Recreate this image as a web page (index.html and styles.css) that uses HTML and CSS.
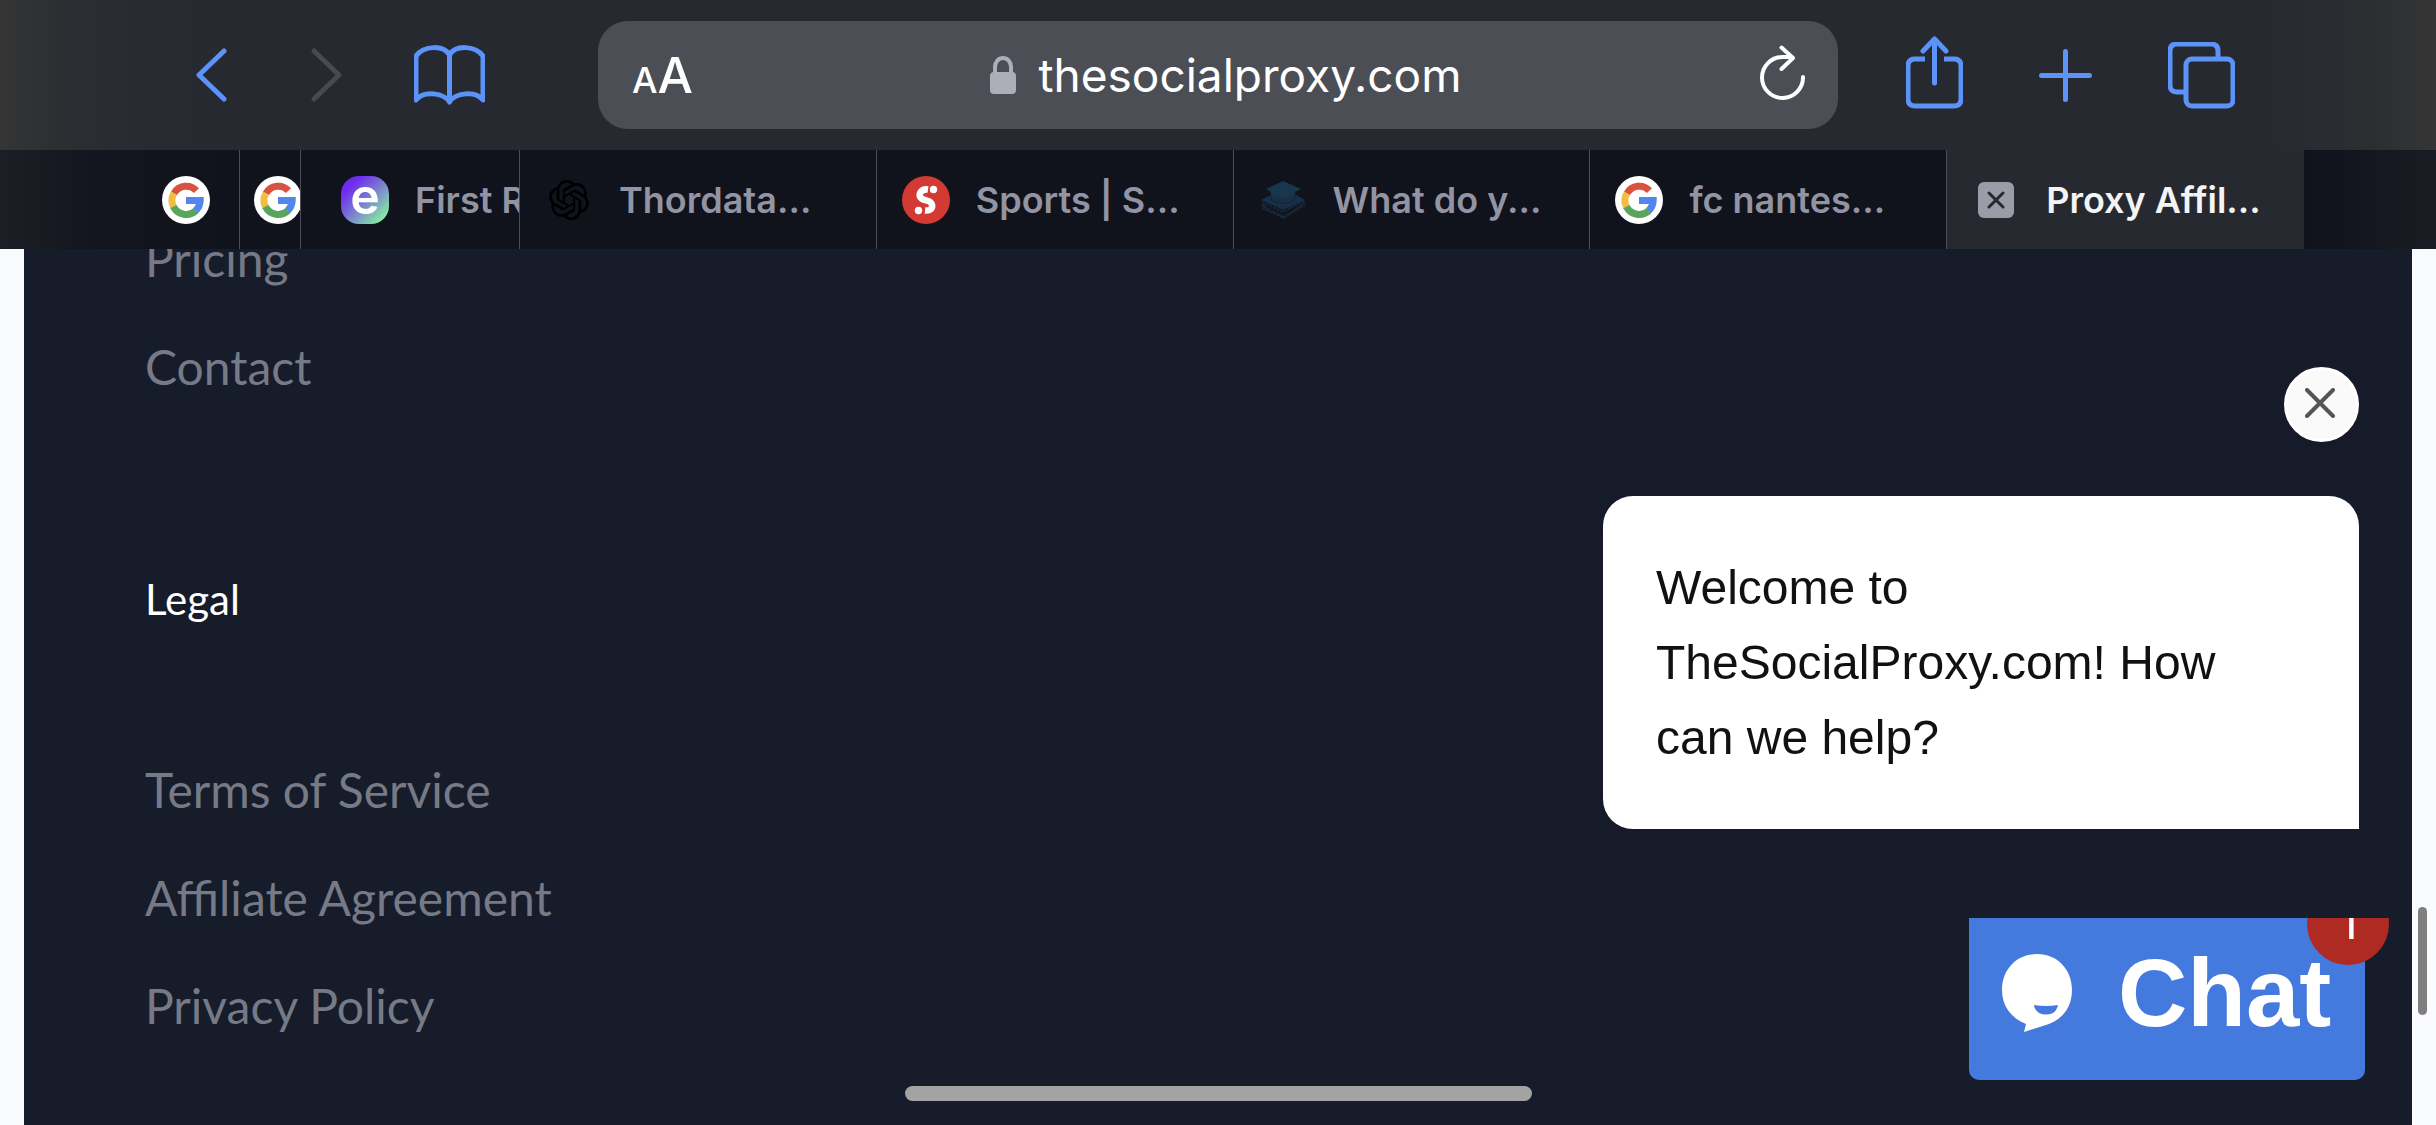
FILE: index.html
```html
<!DOCTYPE html>
<html lang="en">
<head>
  <meta charset="UTF-8" />
  <meta name="viewport" content="width=device-width, initial-scale=1.0"/>
  <title>Proxy Affiliate Program</title>
  <link rel="stylesheet" href="styles.css">
</head>
<body>

<svg class="defs" aria-hidden="true">
  <symbol id="google" viewBox="0 0 48 48">
    <circle cx="24" cy="24" r="24" fill="#fff"/>
    <g fill="none" stroke-width="7">
      <path d="M12 17.4A14 14 0 0 1 34.5 14.6" stroke="#d9513f"/>
      <path d="M11.6 31A14 14 0 0 1 12 17.2" stroke="#f2bd42"/>
      <path d="M34 34.6A14.4 14.4 0 0 1 11.4 30.6" stroke="#58a55c"/>
      <path d="M24 24.4H38.2A14 14 0 0 1 33.6 34.6" stroke="#5186ec"/>
    </g>
  </symbol>
</svg>

<header class="toolbar">
  <div class="toolbar-left">
    <div class="history">
      <button class="tool" aria-label="Back">
        <svg width="31" height="54" viewBox="0 0 31 54"><path d="M28 3L3 27l25 24"/></svg>
      </button>
      <button class="tool off" aria-label="Forward" disabled>
        <svg width="31" height="54" viewBox="0 0 31 54"><path d="M3 3l25 24L3 51"/></svg>
      </button>
    </div>
    <button class="tool" aria-label="Bookmarks">
      <svg width="71" height="60" viewBox="0 0 71 60"><path d="M35.500 57C30 48 10 45 2 55V11C10 0 30 0 35.500 10C41 0 61 0 69 11V55C61 45 41 48 35.500 57V10"/></svg>
    </button>
  </div>

  <form class="address">
    <button class="text-size" type="button" aria-label="Page settings"><span class="small-a">A</span><span class="big-a">A</span></button>
    <label class="url">
      <svg width="26" height="38" viewBox="0 0 26 38" aria-hidden="true"><rect y="16" width="26" height="22" rx="4" fill="#aeaeb8"/><path d="M5 17V11a8 9 0 0 1 16 0v6" fill="none" stroke="#aeaeb8" stroke-width="4"/></svg>
      <input type="text" value="thesocialproxy.com" aria-label="Address">
    </label>
    <button class="reload" type="button" aria-label="Reload">
      <svg width="46" height="60" viewBox="0 0 46 60"><path d="M43 32A20.500 20.500 0 1 1 22.500 12H32M21.500 2.500L33 13L21.500 24"/></svg>
    </button>
  </form>

  <div class="toolbar-right">
    <button class="tool" aria-label="Share">
      <svg width="57" height="78" viewBox="0 0 57 78"><path d="M19 23H9q-7 0-7 7v33q0 7 7 7h39q7 0 7-7V30q0-7-7-7H38" stroke-linecap="butt"/><path d="M28.500 47V3M17 15L28.500 3L40 15"/></svg>
    </button>
    <button class="tool" aria-label="New tab">
      <svg width="53" height="53" viewBox="0 0 53 53"><path d="M26.500 2.500v48M2.500 26.500h48"/></svg>
    </button>
    <button class="tool" aria-label="Show tabs">
      <svg width="67" height="67" viewBox="0 0 67 67"><rect x="18" y="17" width="47" height="47" rx="6"/><path d="M18 50h-9q-7 0-7-7V9q0-7 7-7h34q7 0 7 7v8" stroke-linecap="butt"/></svg>
    </button>
  </div>
</header>

<nav class="tabs">
  <a class="tab tab-first" href="#"><svg class="favicon"><use href="#google"/></svg></a>
  <a class="tab tab-second" href="#"><svg class="favicon"><use href="#google"/></svg></a>
  <a class="tab tab-third" href="#"><span class="favicon e-logo">e</span><span class="title">First R</span></a>
  <a class="tab" href="#">
    <svg class="favicon" viewBox="-2.400 -2.400 28.800 28.800"><path d="M22.2819 9.8211a5.9847 5.9847 0 0 0-.5157-4.9108 6.0462 6.0462 0 0 0-6.5098-2.9A6.0651 6.0651 0 0 0 4.9807 4.1818a5.9847 5.9847 0 0 0-3.9977 2.9 6.0462 6.0462 0 0 0 .7427 7.0966 5.98 5.98 0 0 0 .511 4.9107 6.051 6.051 0 0 0 6.5146 2.9001A5.9847 5.9847 0 0 0 13.2599 24a6.0557 6.0557 0 0 0 5.7718-4.2058 5.9894 5.9894 0 0 0 3.9977-2.9001 6.0557 6.0557 0 0 0-.7475-7.0729zm-9.022 12.6081a4.4755 4.4755 0 0 1-2.8764-1.0408l.1419-.0804 4.7783-2.7582a.7948.7948 0 0 0 .3927-.6813v-6.7369l2.02 1.1686a.071.071 0 0 1 .038.052v5.5826a4.504 4.504 0 0 1-4.4945 4.4944zm-9.6607-4.1254a4.4708 4.4708 0 0 1-.5346-3.0137l.142.0852 4.783 2.7582a.7712.7712 0 0 0 .7806 0l5.8428-3.3685v2.3324a.0804.0804 0 0 1-.0332.0615L9.74 19.9502a4.4992 4.4992 0 0 1-6.1408-1.6464zM2.3408 7.8956a4.485 4.485 0 0 1 2.3655-1.9728V11.6a.7664.7664 0 0 0 .3879.6765l5.8144 3.3543-2.0201 1.1685a.0757.0757 0 0 1-.071 0l-4.8303-2.7865A4.504 4.504 0 0 1 2.3408 7.872zm16.5963 3.8558L13.1038 8.364 15.1192 7.2a.0757.0757 0 0 1 .071 0l4.8303 2.7913a4.4944 4.4944 0 0 1-.6765 8.1042v-5.6772a.79.79 0 0 0-.407-.667zm2.0107-3.0231l-.142-.0852-4.7735-2.7818a.7759.7759 0 0 0-.7854 0L9.409 9.2297V6.8974a.0662.0662 0 0 1 .0284-.0615l4.8303-2.7866a4.4992 4.4992 0 0 1 6.6802 4.66zM8.3065 12.863l-2.02-1.1638a.0804.0804 0 0 1-.038-.0567V6.0742a4.4992 4.4992 0 0 1 7.3757-3.4537l-.142.0805L8.704 5.459a.7948.7948 0 0 0-.3927.6813zm1.0976-2.3654l2.602-1.4998 2.6069 1.4998v2.9994l-2.5974 1.4997-2.6067-1.4997Z" fill="#000"/></svg>
    <span class="title">Thordata...</span>
  </a>
  <a class="tab" href="#">
    <svg class="favicon" viewBox="0 0 48 48"><circle cx="24" cy="24" r="24" fill="#d23a33"/><path d="M26 13.500C19 12.500 15 19 19.500 22.500C23 25 29 24 30 28.500C31 32.500 28 35 23 34.500" fill="none" stroke="#fff" stroke-width="6.500"/><circle cx="31.500" cy="13.500" r="3.700" fill="#fff"/><circle cx="16.500" cy="34.500" r="3.700" fill="#fff"/></svg>
    <span class="title">Sports | S...</span>
  </a>
  <a class="tab" href="#">
    <svg class="favicon" viewBox="0 0 48 48"><path d="M3 26L24 36L45 25M2 29L25 41L46 29M3 32L25 42L46 26M5 28v5" fill="none" stroke="#162839" stroke-width="2" stroke-dasharray="3 1"/><path d="M2 24L14 18H36L46 24L24 34z" fill="#173047"/><path d="M12 14h24v10q-12 7-24 0z" fill="#1a2f43" stroke="#132536"/><path d="M24 5L42 13L36 16V18L24 22L12 18V16L7 13z" fill="#1a364d"/></svg>
    <span class="title">What do y...</span>
  </a>
  <a class="tab" href="#"><svg class="favicon"><use href="#google"/></svg><span class="title">fc nantes...</span></a>
  <div class="tab active">
    <button class="close-tab" aria-label="Close tab"><svg width="36" height="36" viewBox="0 0 36 36"><rect width="36" height="36" rx="6" fill="#9b9ca8"/><path d="M11 11l14 14M25 11L11 25" stroke="#262930" stroke-width="3" stroke-linecap="round"/></svg></button>
    <span class="title">Proxy Affil...</span>
  </div>
</nav>

<main class="page">
  <footer class="footer">
    <ul class="links">
      <li><a href="#">Pricing</a></li>
      <li><a href="#">Contact</a></li>
    </ul>
    <h3>Legal</h3>
    <ul class="links">
      <li><a href="#">Terms of Service</a></li>
      <li><a href="#">Affiliate Agreement</a></li>
      <li><a href="#">Privacy Policy</a></li>
    </ul>
  </footer>
</main>

<!-- chat widget -->
<div class="widget">
  <button class="dismiss" aria-label="Close message">
    <svg width="30" height="30" viewBox="0 0 30 30"><path d="M2 2l26 26M28 2L2 28" stroke="#555" stroke-width="4" stroke-linecap="round"/></svg>
  </button>
  <p class="bubble">Welcome to TheSocialProxy.com! How can we help?</p>
  <div class="chat-frame">
    <button class="chat">
      <svg width="70" height="78" viewBox="0 0 70 78"><path d="M35 0C15 0 0 15 0 36C0 52 9 64 24 70L22 78L47 70C62 64 70 52 70 36C70 15 55 0 35 0Z" fill="#fff"/><path d="M32 51Q44 53 56 51Q55 56 51 59Q44 62 37 59Q32 55 32 51Z" fill="#447add"/></svg>
      <span>Chat</span>
    </button>
    <span class="badge">1</span>
  </div>
</div>

<div class="scroll-thumb"></div>
<div class="home-bar"></div>

</body>
</html>
```
FILE: styles.css
```css
* { box-sizing: border-box; }
body {
  margin: 0;
  height: 100vh;
  display: flex;
  flex-direction: column;
  overflow: hidden;
  background: #fafbfe;
  font-family: Inter, 'Liberation Sans', sans-serif;
}
button {
  display: flex;
  align-items: center;
  padding: 0;
  border: none;
  background: none;
  color: inherit;
  font-family: inherit;
  cursor: pointer;
}
svg { display: block; }
.defs {
  position: absolute;
  width: 0;
  height: 0;
}

/* browser bar */
.toolbar {
  height: 150px;
  flex-shrink: 0;
  display: flex;
  align-items: center;
  padding: 0 201px 0 196px;
  background: linear-gradient(90deg, #353535, #2c2e32 60px, #272a31 160px, #262930 260px, #262930 calc(100% - 180px), #2c2e32 calc(100% - 60px), #353535);
}
.toolbar-left {
  display: flex;
  align-items: center;
  gap: 72px;
  margin-right: 113px;
}
.history {
  display: flex;
  gap: 84px;
}
.toolbar-right {
  display: flex;
  align-items: center;
  gap: 76px;
  margin-left: 68px;
}
.tool svg {
  fill: none;
  stroke: #5b93f8;
  stroke-width: 5;
  stroke-linecap: round;
  stroke-linejoin: round;
}
.tool.off svg { stroke: #484a50; }
.address {
  flex: 1;
  height: 108px;
  display: flex;
  align-items: center;
  padding: 0 32px 0 34px;
  border-radius: 30px;
  background: #4c4e55;
  color: #fff;
}
.text-size {
  align-items: baseline;
  font-weight: 500;
}
.small-a { font-size: 36px; }
.big-a { font-size: 50px; }
.url {
  flex: 1;
  display: flex;
  align-items: center;
  justify-content: center;
  gap: 22px;
}
.url input {
  width: 424px;
  padding: 0;
  border: none;
  outline: none;
  background: none;
  color: #fff;
  font-family: inherit;
  font-size: 46px;
}
.reload svg {
  fill: none;
  stroke: #fff;
  stroke-width: 4;
  stroke-linecap: round;
  stroke-linejoin: round;
}

/* tab strip */
.tabs {
  height: 99px;
  flex-shrink: 0;
  display: flex;
  padding: 0 132px;
  background: linear-gradient(90deg, #1b1e24, #14161f 90px, #10121c 220px, #10121c calc(100% - 130px), #191c22);
}
.tab {
  flex: 1;
  min-width: 0;
  display: flex;
  align-items: center;
  gap: 26px;
  padding-left: 25px;
  overflow: hidden;
  border-right: 1px solid #4b4d59;
  color: #9294a3;
  font-size: 36px;
  font-weight: 600;
  text-decoration: none;
}
.tab-first {
  flex: 0 0 108px;
  padding-left: 30px;
}
.tab-second {
  flex: 0 0 61px;
  padding-left: 14px;
}
.tab-third {
  flex: 0 0 219px;
  padding-left: 40px;
}
.tab.active {
  border-right-color: #262930;
  background: #262930;
  color: #f4f4f5;
}
.close-tab {
  width: 48px;
  flex-shrink: 0;
  justify-content: center;
}
.title {
  overflow: hidden;
  white-space: nowrap;
}
.favicon {
  width: 48px;
  height: 48px;
  flex-shrink: 0;
}
.e-logo {
  border-radius: 18px;
  background: linear-gradient(135deg, #6f2bee 20%, #7a7ad0 50%, #86f0a2 90%);
  color: #fff;
  font-size: 50px;
  line-height: 40px;
  text-align: center;
}

/* page */
.page {
  flex: 1;
  min-height: 0;
  margin: 0 24px;
  overflow: hidden;
  background: #171c2b;
}
.footer {
  margin-top: -20px;
  padding: 0 121px;
  font-family: Lato, sans-serif;
}
.links {
  margin: 0;
  padding: 0;
  display: flex;
  flex-direction: column;
  gap: 48px;
  list-style: none;
  font-size: 48px;
  line-height: 60px;
}
.links a {
  color: #757a86;
  text-decoration: none;
}
.footer h3 {
  margin: 172px 0 131px;
  color: #fff;
  font-size: 42px;
  font-weight: 400;
  line-height: 60px;
}

/* chat widget, fixed over the page */
.widget {
  position: fixed;
  right: 47px;
  bottom: 45px;
  display: flex;
  flex-direction: column;
  align-items: flex-end;
  font-family: 'Liberation Sans', Arial, sans-serif;
}
.dismiss {
  width: 75px;
  height: 75px;
  justify-content: center;
  margin-right: 30px;
  padding: 0 4px 4px 0;
  border: 3px solid #fff;
  border-radius: 50%;
  background: #fafafa;
  box-shadow: 0 3px 12px rgba(30, 20, 40, 0.5);
}
.bubble {
  width: 756px;
  margin: 54px 30px 89px 0;
  padding: 54px 53px;
  border-radius: 30px 30px 0 30px;
  background: #fff;
  box-shadow: 0 3px 12px rgba(30, 20, 40, 0.5);
  color: #111;
  font-size: 48px;
  line-height: 75px;
}
.chat-frame {
  position: relative;
  padding-right: 24px;
  overflow: hidden;
}
.chat {
  width: 396px;
  height: 162px;
  gap: 46px;
  padding: 0 33px 12px;
  border-radius: 0 0 10px 10px;
  background: #447add;
  color: #fff;
  font-size: 96px;
  font-weight: 700;
}
.badge {
  position: absolute;
  top: -35px;
  right: 0;
  width: 82px;
  height: 82px;
  border-radius: 50%;
  background: #af2a22;
  color: #fff;
  font-family: Inter, sans-serif;
  font-size: 48px;
  line-height: 78px;
  text-align: center;
}

/* scroll thumb and home indicator */
.scroll-thumb {
  position: fixed;
  right: 9px;
  bottom: 110px;
  width: 9px;
  height: 108px;
  border-radius: 5px;
  background: #7f7f80;
}
.home-bar {
  position: fixed;
  bottom: 24px;
  left: 50%;
  width: 627px;
  height: 15px;
  margin-left: -313px;
  border-radius: 8px;
  background: #a3a3a3;
}
```
